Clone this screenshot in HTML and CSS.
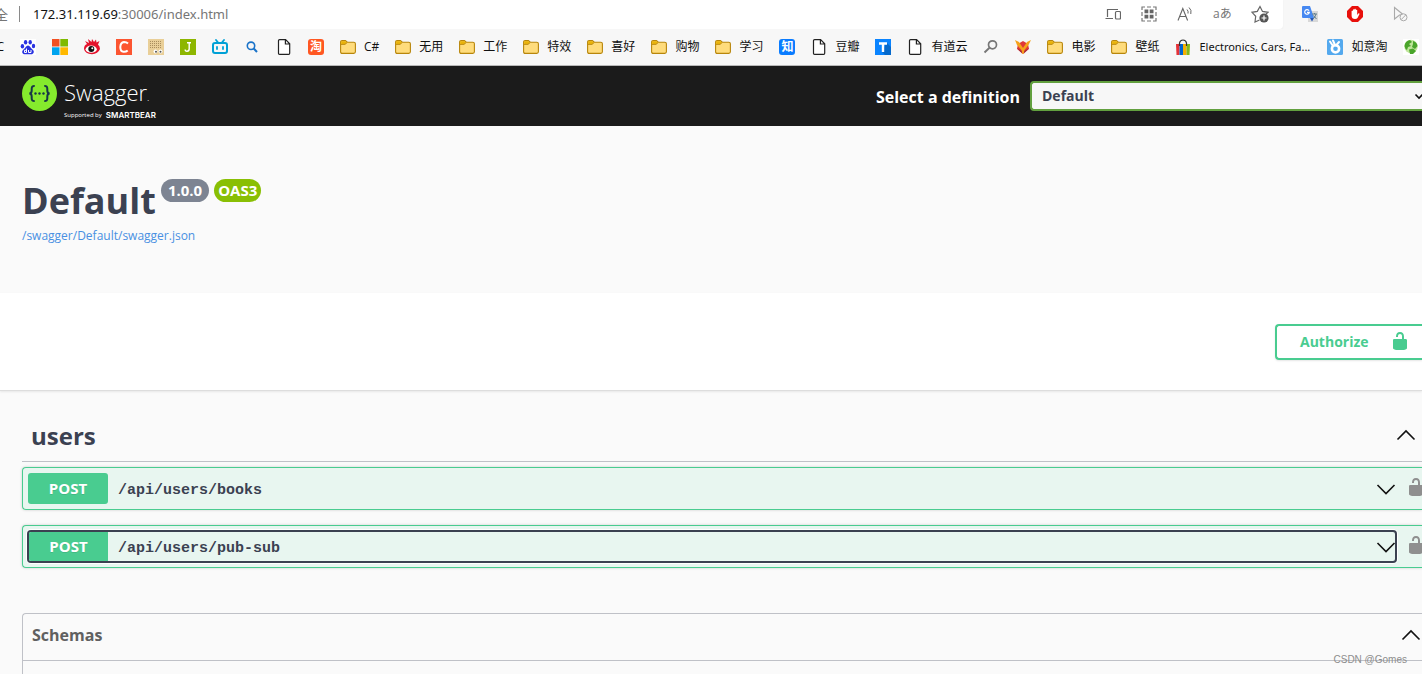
FILE: index.html
```html
<!DOCTYPE html>
<html lang="zh-CN">
<head>
<meta charset="utf-8">
<title>Swagger UI</title>
<link rel="stylesheet" href="styles.css">
</head>
<body>
<svg class="defs" aria-hidden="true">
  <symbol id="folder" viewBox="0 0 16 16"><path d="M.6 3.2Q.6 1.6 2.2 1.6H5.4L7.4 3.2H13.8Q15.4 3.2 15.4 4.8V12.8Q15.4 14.4 13.8 14.4H2.2Q.6 14.4.6 12.8Z" fill="#ffdc7c" stroke="#b8860b" stroke-width="1.1"/><path d="M1.2 2.2H5.2L7 3.6L5.2 5.2H1.2Z" fill="#eab308"/><path d="M1 5.4H5L7 3.7" fill="none" stroke="#b8860b" stroke-width=".9"/></symbol>
  <symbol id="doc" viewBox="0 0 16 16"><path d="M3.6.7H9.6L13.7 4.8V14.2Q13.7 15.3 12.6 15.3H3.6Q2.5 15.3 2.5 14.2V1.8Q2.5.7 3.6.7ZM9.400 .9V5H13.5" fill="#fff" stroke="#222" stroke-width="1.2"/></symbol>
  <symbol id="unlocked" viewBox="0 0 20 20"><path d="M15.8 8H14V5.6C14 2.703 12.665 1 10 1 7.334 1 6 2.703 6 5.6V6h2v-.801C8 3.754 8.797 3 10 3c1.203 0 2 .754 2 2.199V8H4c-.553 0-1 .646-1 1.199V17c0 .549.428 1.139.951 1.307l1.197.387C5.672 18.861 6.55 19 7.1 19h5.8c.549 0 1.428-.139 1.951-.307l1.196-.387c.524-.167.953-.757.953-1.306V9.199C17 8.646 16.352 8 15.8 8z"/></symbol>
  <symbol id="up" viewBox="0 0 20 20"><path d="M1.5 14.5L10 6L18.500 14.500" fill="none" stroke="#111" stroke-width="1.6"/></symbol>
  <symbol id="down" viewBox="0 0 20 20"><path d="M1.500 6L10 14.500L18.500 6" fill="none" stroke="#111" stroke-width="1.6"/></symbol>
</svg>

<div class="toolbar">
  <div class="address">
    <span class="secure">全</span>
    <span class="divider"></span>
    <span class="url"><b>172.31.119.69</b>:30006/index.html</span>
    <div class="address-icons">
      <svg viewBox="0 0 16 16"><path d="M2.500 11V3.500H13M.5 12.500H8" fill="none" stroke="#666" stroke-width="1.200"/><rect x="10.500" y="5.500" width="5" height="7.500" rx="1" fill="none" stroke="#666" stroke-width="1.200"/></svg>
      <svg viewBox="0 0 16 16"><path d="M1 4V1H4M12 1H15V4M15 12V15H12M4 15H1V12M6 1H10M6 15H10M1 6V10M15 6V10" fill="none" stroke="#777" stroke-width="1.200"/><path d="M3.500 3.500H7.300V7.300H3.500ZM8.700 3.500H12.500V7.300H8.700ZM3.500 8.700H7.300V12.500H3.500ZM8.700 8.700H12.500V12.500H8.700Z" fill="#666"/></svg>
      <svg viewBox="0 0 16 16"><path d="M1 14.500L5.800 2.500L10.600 14.500M2.600 10.500H9" fill="none" stroke="#666" stroke-width="1.100"/><path d="M10 3.500Q11.600 5 11 7.500M12 1.500Q15 4 13.800 8" fill="none" stroke="#666"/></svg>
      <span class="translate">aあ</span>
      <svg viewBox="0 0 18 18"><path d="M8.500 15L4 17L4.700 11.300L1 7.300L6.300 6.400L9 1.500L11.500 6.400L17 7.300L15 9" fill="none" stroke="#666" stroke-width="1.200"/><circle cx="13" cy="13" r="4.600" fill="#555"/><path d="M13 10.500V15.500M10.500 13H15.500" stroke="#fff" stroke-width="1.200"/></svg>
    </div>
  </div>
  <div class="extensions">
    <svg viewBox="0 0 16 16"><rect x="6" y="5" width="10" height="11" fill="#d8d8d8"/><path d="M1 0H8L12 12H1Q0 12 0 11V1Q0 0 1 0Z" fill="#4688f1"/><path d="M8 12H12L10 15.500Z" fill="#2456b8"/><path d="M7 4.700A2.300 2.300 0 1 0 7.300 6.300H5" fill="none" stroke="#fff" stroke-width="1.200"/><path d="M10 8H15M12.500 7V8M14 8Q13 11.500 11 13M11.500 9.500L14.500 13" fill="none" stroke="#607d8b"/></svg>
    <svg viewBox="0 0 16 16"><path d="M5 0H11L16 5V11L11 16H5L0 11V5Z" fill="#e8100c"/><path d="M4.600 8V5Q5.300 4.200 6 5V7V3.700Q6.700 3 7.400 3.700V7V3Q8.100 2.300 8.800 3V7V4Q9.500 3.300 10.200 4V9L11.500 7.300Q12.500 7 12.500 8L10.500 12Q9.800 13 8 13Q4.600 13 4.600 9.500Z" fill="#fff"/></svg>
    <svg viewBox="0 0 16 16"><path d="M2.500 13V1.500L11 8.500L7.500 9Z" fill="none" stroke="#aaa" stroke-width="1.100"/><circle cx="11.500" cy="11.300" r="3.500" fill="#f7f7f7" stroke="#aaa"/><path d="M9.300 13.500L13.700 9" stroke="#aaa"/></svg>
  </div>
</div>

<nav class="bookmarks">
  <a href="#" class="clipped">C</a>
  <a href="#" aria-label="Baidu"><svg viewBox="0 0 16 16"><rect width="16" height="16" fill="#fff"/><g fill="#2932e1"><ellipse cx="2.400" cy="7.200" rx="1.700" ry="2.200"/><ellipse cx="5.600" cy="3.200" rx="1.700" ry="2.300"/><ellipse cx="10.200" cy="3.200" rx="1.700" ry="2.300"/><ellipse cx="13.500" cy="7" rx="1.700" ry="2.200"/><path d="M8 6.500C10 6.500 10.500 9 12.500 10.500C15 12.500 13.500 15.500 11 15.300H5C2.300 15.500 1.200 12.500 3.500 10.500C5.500 9 6 6.500 8 6.500Z"/></g><path d="M6.500 9.500V13.500H4.500V11.300H6.500M8.500 11V13.500H11V11" fill="none" stroke="#fff"/></svg></a>
  <a href="#" aria-label="Microsoft"><svg viewBox="0 0 16 16"><path fill="#f25022" d="M0 0H7.500V7.500H0Z"/><path fill="#7fba00" d="M8.300 0H16V7.500H8.300Z"/><path fill="#00a4ef" d="M0 8.300H7.500V16H0Z"/><path fill="#ffb900" d="M8.300 8.300H16V16H8.300Z"/></svg></a>
  <a href="#" aria-label="Sina"><svg viewBox="0 0 16 16"><path d="M0 10Q0 6 3 5L1 2L5 4L4 0L7.500 3L8 0L10 3L12 .5L12.500 3.500L15.500 2L14 5.500Q16 7 16 10Q14 15 8 15.200Q1 15 0 10Z" fill="#e4122c"/><ellipse cx="7.200" cy="10.200" rx="5.600" ry="3.600" fill="#fff"/><circle cx="7.300" cy="10" r="3" fill="#111"/><circle cx="8.300" cy="9.300" r="1" fill="#fff"/></svg></a>
  <a href="#" aria-label="CSDN"><svg viewBox="0 0 16 16"><rect width="16" height="16" fill="#fc5531"/><path d="M12 4.500Q10.500 3 8 3Q4.500 3.500 4.300 8Q4.300 12.500 7.500 12.800Q10 13 11.700 11.500" fill="none" stroke="#fff" stroke-width="2"/></svg></a>
  <a href="#" aria-label="Tieba"><svg viewBox="0 0 16 16"><rect width="16" height="16" fill="#e9cf98"/><path d="M2 2.500H14M2 4.500H14M2 6.500H14M2 8.500H14" stroke="#a98e5d" stroke-dasharray="1 1"/><circle cx="7.500" cy="12.500" r="2" fill="#fff"/><circle cx="12.500" cy="12.500" r="2" fill="#fff"/><circle cx="8" cy="12.700" r="1" fill="#555"/><circle cx="12.500" cy="12.700" r="1" fill="#555"/></svg></a>
  <a href="#" aria-label="J"><svg viewBox="0 0 16 16"><rect width="16" height="16" fill="#8db600"/><path d="M7 3.700H11M9.200 3.700V9.800Q9.200 12.300 7 12.300Q5 12.300 5.200 10.500" fill="none" stroke="#fff" stroke-width="1.400"/></svg></a>
  <a href="#" aria-label="Bilibili"><svg viewBox="0 0 16 16"><rect x="1" y="4" width="14" height="10" rx="2" fill="none" stroke="#00a1d6" stroke-width="2"/><path d="M4 1L6.500 4M12 1L9.500 4M5 8V10M11 8V10" stroke="#00a1d6" stroke-width="1.800" stroke-linecap="round"/></svg></a>
  <a href="#" aria-label="Search"><svg viewBox="0 0 16 16"><circle cx="7" cy="6.800" r="3.700" fill="none" stroke="#1a73c9" stroke-width="1.600"/><path d="M9.700 9.500L13 13" stroke="#1a73c9" stroke-width="2"/></svg></a>
  <a href="#" aria-label="Page"><svg><use href="#doc"/></svg></a>
  <a href="#" class="glyph taobao">淘</a>
  <a href="#"><svg><use href="#folder"/></svg>C#</a>
  <a href="#"><svg><use href="#folder"/></svg>无用</a>
  <a href="#"><svg><use href="#folder"/></svg>工作</a>
  <a href="#"><svg><use href="#folder"/></svg>特效</a>
  <a href="#"><svg><use href="#folder"/></svg>喜好</a>
  <a href="#"><svg><use href="#folder"/></svg>购物</a>
  <a href="#"><svg><use href="#folder"/></svg>学习</a>
  <a href="#" class="glyph zhihu">知</a>
  <a href="#"><svg><use href="#doc"/></svg>豆瓣</a>
  <a href="#" aria-label="T"><svg viewBox="0 0 16 16"><rect width="16" height="16" fill="#0a84ff"/><path d="M11.500 3.500L16 8V16H10L7 13Z" fill="#066acc"/><path d="M4 4.500H12M8 4.500V13" stroke="#fff" stroke-width="2.400"/></svg></a>
  <a href="#"><svg><use href="#doc"/></svg>有道云</a>
  <a href="#" aria-label="Search"><svg viewBox="0 0 16 16"><circle cx="9.500" cy="5.800" r="4" fill="none" stroke="#777" stroke-width="1.700"/><path d="M6.500 8.800L1.500 13.500" stroke="#777" stroke-width="1.900"/></svg></a>
  <a href="#" aria-label="Fox"><svg viewBox="0 0 16 16"><path d="M3 5L8 2L13 5L14 10L8 15L2 10Z" fill="#df3838"/><path d="M0 1L4 3L8 9L12 3L16 1L13.500 6L9.500 11L8.500 15H7.500L6.500 11L2 6Z" fill="#f5a21b"/><path d="M2 9L6.500 12L7 14.500ZM14 9L9.500 12L9 14.500Z" fill="#9d2a3a"/></svg></a>
  <a href="#"><svg><use href="#folder"/></svg>电影</a>
  <a href="#"><svg><use href="#folder"/></svg>壁纸</a>
  <a href="#"><svg viewBox="0 0 16 16"><path d="M1 5H4.500V16H1.500Z" fill="#e53238"/><path d="M4.500 5H8V16H4.500Z" fill="#0064d2"/><path d="M8 5H11.500V16H8Z" fill="#f5af02"/><path d="M11.500 5H15L14.500 16H11.500Z" fill="#86b817"/><path d="M4.500 7V4Q5 1 8 1Q11 1 11.500 4V7" fill="none" stroke="#333" stroke-width="1.200"/></svg><span class="ebay">Electronics, Cars, Fa...</span></a>
  <a href="#"><svg viewBox="0 0 16 16"><rect width="16" height="16" rx="1.500" fill="#54a9ee"/><circle cx="8.500" cy="9.800" r="3.600" fill="none" stroke="#fff" stroke-width="2.600"/><path d="M3 2.500L6 7M6 1.500L8 6M12 3L9 6.500" stroke="#fff" stroke-width="2" stroke-linecap="round"/></svg>如意淘</a>
  <a href="#" aria-label="Globe"><svg viewBox="0 0 16 16"><rect width="16" height="16" fill="#fff"/><circle cx="8" cy="7.500" r="6.700" fill="#bfe59a"/><path d="M1.500 7Q2 2 7 1L9 3L6 5L8 7L5 8L4 11Q2 10 1.500 7ZM10 2Q14 3 14.500 7L12 10L9 8L10 5ZM6 10.500L10 9.500L13 12L10 15H7Z" fill="#4aa52b"/></svg></a>
</nav>

<header class="topbar">
  <a class="logo" href="#">
    <svg class="logo-mark" viewBox="0 0 35 35"><circle cx="17.500" cy="17.500" r="17.500" fill="#85ea2d"/><path d="M12.700 10Q9.700 9.700 9.700 12.700V14.500Q9.700 17.500 7.300 17.500Q9.700 17.500 9.700 20.500V22.300Q9.700 25.300 12.700 25M22.300 10Q25.300 9.700 25.300 12.700V14.500Q25.300 17.500 27.700 17.500Q25.300 17.500 25.300 20.500V22.300Q25.300 25.300 22.300 25" fill="none" stroke="#173647" stroke-width="2"/><g fill="#173647"><circle cx="13.500" cy="17.500" r="1.200"/><circle cx="17.500" cy="17.500" r="1.200"/><circle cx="21.500" cy="17.500" r="1.200"/></g></svg>
    <span class="logo-text"><span class="logo-name">Swagger<small>.</small></span><span class="logo-sub">Supported by <b>SMARTBEAR</b></span></span>
  </a>
  <label class="definition" for="definition">Select a definition</label>
  <div class="select-box">
    <select id="definition"><option>Default</option></select>
    <svg viewBox="0 0 10 10"><path d="M1.500 3.500L5 7L8.500 3.500" fill="none" stroke="#111" stroke-width="1.600"/></svg>
  </div>
</header>

<section class="info">
  <div class="title-row"><h1>Default</h1><span class="badge version">1.0.0</span><span class="badge oas">OAS3</span></div>
  <a href="#" class="spec">/swagger/Default/swagger.json</a>
</section>

<section class="schemes">
  <button class="authorize">Authorize<svg><use href="#unlocked"/></svg></button>
</section>

<main>
  <h2 class="tag">users<svg><use href="#up"/></svg></h2>
  <div class="operation">
    <button class="summary"><span class="method">POST</span><span class="path">/api/users/books</span><svg><use href="#down"/></svg></button>
    <button class="lock" aria-label="Authorization"><svg><use href="#unlocked"/></svg></button>
  </div>
  <div class="operation">
    <button class="summary focused"><span class="method">POST</span><span class="path">/api/users/pub-sub</span><svg><use href="#down"/></svg></button>
    <button class="lock" aria-label="Authorization"><svg><use href="#unlocked"/></svg></button>
  </div>
  <section class="models">
    <h3>Schemas<svg><use href="#up"/></svg></h3>
  </section>
</main>
<div class="watermark">CSDN @Gomes</div>
</body>
</html>
```

FILE: styles.css
```css
* { box-sizing: border-box; }
html { overflow: hidden; }
body {
  margin: 0;
  height: 100vh;
  overflow: hidden;
  display: flex;
  flex-direction: column;
  background: #fafafa;
  color: #3b4151;
  font-family: "Open Sans", "Noto Sans CJK SC", sans-serif;
}
svg { display: block; flex: none; }
button { border: 0; background: none; font: inherit; padding: 0; }
a { text-decoration: none; color: inherit; }
.defs { position: absolute; width: 0; height: 0; }

.toolbar { display: flex; flex: none; height: 29px; background: #f7f7f7; }
.address {
  flex: 1;
  display: flex;
  align-items: center;
  padding-bottom: 1px;
  background: #fff;
  border-bottom-right-radius: 4px;
  font-size: 14px;
  color: #767676;
  box-shadow: 0 1px 2px #eee;
}
.secure { width: 8px; display: flex; justify-content: flex-end; }
.divider { width: 1px; height: 16px; margin: 0 13px 0 11px; background: #8a8a8a; }
.url { font-family: "Noto Sans", sans-serif; font-size: 13px; }
.url b { font-weight: 400; color: #111; }
.address-icons { margin-left: auto; display: flex; align-items: center; gap: 20px; padding-right: 14px; }
.address-icons svg { width: 16px; height: 16px; }
.address-icons svg:last-child { width: 18px; height: 18px; }
.translate { width: 18px; font-size: 12px; line-height: 16px; white-space: nowrap; }
.extensions { flex: none; width: 139px; padding: 0 0 1px 19px; display: flex; align-items: center; gap: 29px; }
.extensions svg { width: 16px; height: 16px; }

.bookmarks {
  flex: none;
  height: 37px;
  display: flex;
  align-items: center;
  gap: 16px;
  background: #f7f7f7;
  border-bottom: 1px solid #b8b8b8;
  font-size: 12px;
  line-height: 16px;
  color: #111;
  white-space: nowrap;
}
.bookmarks a { flex: none; display: flex; align-items: center; gap: 8px; }
.bookmarks svg { width: 16px; height: 16px; }
.bookmarks .clipped { width: 4px; justify-content: flex-end; }
.bookmarks .glyph { width: 16px; height: 16px; justify-content: center; border-radius: 3px; color: #fff; font-weight: 700; }
.taobao { background: #ff5722; }
.zhihu { background: #0a7cff; }
.ebay { width: 112px; font-family: "Noto Sans", sans-serif; font-size: 11px; }

.topbar { flex: none; height: 60px; padding-left: 22px; display: flex; align-items: center; background: #1b1b1b; color: #fff; }
.logo { display: flex; gap: 7px; margin-right: auto; padding-top: 1px; }
.logo-mark { width: 35px; height: 35px; }
.logo-text { display: flex; flex-direction: column; padding-top: 2px; }
.logo-name { font-size: 22px; line-height: 29px; font-weight: 300; }
.logo-name small { font-size: 10px; }
.logo-sub { display: flex; align-items: center; gap: 4px; font-size: 6px; line-height: 6px; white-space: nowrap; }
.logo-sub b { font-size: 8px; font-weight: 600; font-family: Inter, sans-serif; }
.definition { font-size: 16px; font-weight: 700; padding: 1px 10px 0 0; }
.select-box { width: 392px; position: relative; }
.select-box select {
  display: block;
  width: 100%;
  height: 30px;
  padding: 0 10px 2px;
  appearance: none;
  border: 2px solid #62a03f;
  border-right: 0;
  border-radius: 4px 0 0 4px;
  background: #f7f7f7;
  color: #3b4151;
  font: 700 14px "Open Sans", sans-serif;
}
.select-box svg { position: absolute; right: -2px; top: 10px; width: 10px; height: 10px; }

.info { flex: none; height: 167px; padding: 50px 22px 0; }
.title-row { display: flex; align-items: flex-start; gap: 5px; }
h1 { margin: 0; font-size: 36px; line-height: 49px; }
.badge { margin-top: 3px; height: 23px; border-radius: 12px; color: #fff; font-size: 15px; font-weight: 700; line-height: 23px; }
.version { padding: 0 7px; background: #7d8492; }
.oas { padding: 0 4px; background: #89bf04; }
.spec { display: block; width: max-content; color: #4990e2; font-size: 12px; line-height: 22px; }

.schemes { flex: none; height: 98px; padding-top: 31px; background: #fff; border-bottom: 1px solid #ddd; box-shadow: 0 1px 2px rgba(0,0,0,.08); display: flex; justify-content: flex-end; align-items: flex-start; }
.authorize {
  width: 147px;
  height: 36px;
  padding: 0 12px 2px 23px;
  display: flex;
  align-items: center;
  justify-content: space-between;
  border: 2px solid #49cc90;
  border-right: 0;
  border-radius: 4px 0 0 4px;
  box-shadow: 0 1px 2px rgba(0,0,0,.1);
  color: #49cc90;
  font-size: 14px;
  font-weight: 700;
}
.authorize svg { width: 20px; height: 20px; fill: #49cc90; }

main { flex: 1; padding-left: 22px; }
.tag { margin: 20px 0 5px; height: 51px; padding: 0 6px 2px 9px; border-bottom: 1px solid #bfc1c7; display: flex; align-items: center; justify-content: space-between; font-size: 24px; }
.tag svg, .summary svg, .models svg { width: 20px; height: 20px; }
.operation {
  height: 43px;
  margin-bottom: 15px;
  padding-left: 4px;
  display: flex;
  align-items: center;
  background: #e8f6f0;
  border: 1px solid #49cc90;
  border-right: 0;
  border-radius: 4px 0 0 4px;
  box-shadow: 0 0 3px rgba(0,0,0,.19);
}
.summary { flex: 1; height: 33px; padding: 1px; display: flex; align-items: center; border-radius: 4px; color: #3b4151; }
.focused { box-shadow: inset 0 0 0 2px #3b4151, 0 0 0 1px #fff; padding: 2px 1px 2px 2px; }
.method { width: 80px; height: 31px; border-radius: 3px; background: #49cc90; color: #fff; font-size: 15px; font-weight: 700; line-height: 31px; text-align: center; text-shadow: 0 1px 0 rgba(0,0,0,.1); }
.focused .method { width: 79px; height: 29px; line-height: 29px; border-radius: 2px 0 0 2px; }
.path { padding: 4px 0 0 10px; font-family: "Liberation Mono", monospace; font-size: 15px; font-weight: 700; }
.summary svg { margin-left: auto; }
.lock { width: 25px; height: 33px; overflow: hidden; padding-left: 9px; }
.lock svg { width: 20px; height: 20px; margin-bottom: 4px; fill: #8f8f8f; }
.models { margin-top: 45px; height: 70px; border: 1px solid #bfc1c7; border-right: 0; border-bottom: 0; border-radius: 4px 0 0; }
.models h3 { margin: 0; height: 47px; padding: 0 1px 4px 9px; border-bottom: 1px solid #bfc1c7; display: flex; align-items: center; justify-content: space-between; color: #606060; font-size: 16px; }
.watermark { position: absolute; right: 15px; bottom: 7px; font: 10px/14px "Liberation Sans", sans-serif; color: #8d8d8d; }
```
